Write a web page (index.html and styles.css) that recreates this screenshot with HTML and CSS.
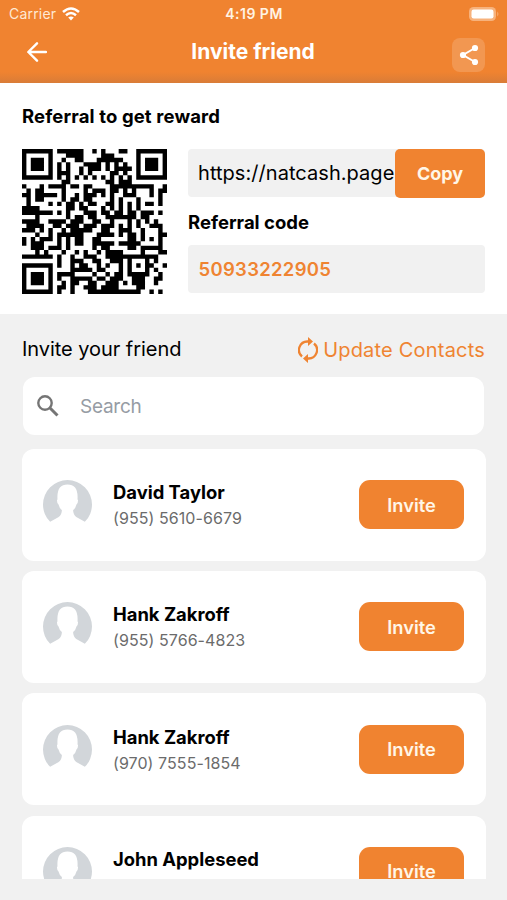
FILE: index.html
```html
<!DOCTYPE html>
<html lang="en">
<head>
    <meta charset="UTF-8">
    <meta name="viewport" content="width=device-width, initial-scale=1.0">
    <title>Invite friend</title>
    <link rel="stylesheet" href="styles.css">
</head>
<body>
    <svg class="sprite">
        <symbol id="avatar" viewBox="0 0 48 48">
            <path fill="#d2d6da" d="M7 41A24 24 0 1 1 41 41L33 36.500Q29.500 34.500 29.500 29.500Q32 27.500 32.800 24Q34.500 22.500 34.300 19.500L33.800 19Q34.800 4.500 24 4.500Q13.200 4.500 14.200 19L13.700 19.500Q13.500 22.500 15.200 24Q16 27.500 18.500 29.500Q18.500 34.500 15 36.500Z"/>
        </symbol>
    </svg>

    <header class="header">
        <div class="status-bar">
            <div class="carrier">
                <span>Carrier</span>
                <svg width="18" height="14" viewBox="0 0 18 14" fill="none" stroke="#fff" stroke-width="2.500">
                    <path d="M1 5Q9-2 17 5M4 8.200Q9 3.900 14 8.200"/>
                    <path d="M9 13.500L6.200 10.600Q9 8.400 11.800 10.600Z" fill="#fff" stroke="none"/>
                </svg>
            </div>
            <span class="time">4:19 PM</span>
            <svg class="battery" width="31" height="14" viewBox="0 0 31 14">
                <rect x="0" y="0" width="27" height="14" rx="4.500" fill="#f7b27c"/>
                <rect x="2.500" y="2.500" width="22" height="9" rx="2.200" fill="#fff"/>
                <path d="M28.300 4.500Q30.500 7 28.300 9.500Z" fill="#f7b27c"/>
            </svg>
        </div>
        <div class="nav">
            <svg class="back" width="20" height="20" viewBox="0 0 20 20" fill="none" stroke="#fff" stroke-width="2.400" stroke-linecap="round" stroke-linejoin="round">
                <path d="M19 10H1.500M10 1.300L1.300 10L10 18.700"/>
            </svg>
            <h1>Invite friend</h1>
            <div class="share">
                <svg width="20" height="22" viewBox="0 0 20 22" fill="#fff">
                    <path d="M16 4L4 11L16 18" fill="none" stroke="#fff" stroke-width="2"/>
                    <circle cx="16" cy="4" r="3.100"/>
                    <circle cx="4" cy="11" r="3.100"/>
                    <circle cx="16" cy="18" r="3.100"/>
                </svg>
            </div>
        </div>
    </header>

    <section class="referral">
        <h2 class="reward-title">Referral to get reward</h2>
        <div class="referral-row">
            <svg class="qr" viewBox="0 0 33 33"><path id="qrPath"/></svg>
            <div class="referral-info">
                <div class="link-box">
                    <span class="link">https://natcash.page</span>
                    <button class="copy-button">Copy</button>
                </div>
                <h2 class="code-title">Referral code</h2>
                <div class="code-box">50933222905</div>
            </div>
        </div>
    </section>

    <section class="contacts">
        <div class="contacts-head">
            <span class="contacts-title">Invite your friend</span>
            <div class="update">
                <svg width="20" height="26" viewBox="0 0 20 26">
                    <path d="M4 19.500A8.500 8.500 0 0 1 10 4.500H11M16 6.500A8.500 8.500 0 0 1 10 21.500H9" fill="none" stroke="#ef8432" stroke-width="2.300"/>
                    <path d="M10 0L15 4.500L10 9ZM10 17L5 21.500L10 26Z" fill="#ef8432"/>
                </svg>
                <span>Update Contacts</span>
            </div>
        </div>
        <div class="search">
            <svg width="22" height="22" viewBox="0 0 22 22" fill="none" stroke="#757575" stroke-width="2.400">
                <circle cx="8" cy="8" r="6.700"/>
                <path d="M13 13L20.500 20.500" stroke-width="3"/>
            </svg>
            <span>Search</span>
        </div>
        <div class="list">
            <div class="card">
                <svg class="avatar"><use href="#avatar"/></svg>
                <div class="person">
                    <div class="name">David Taylor</div>
                    <div class="phone">(955) 5610-6679</div>
                </div>
                <button class="invite-button">Invite</button>
            </div>
            <div class="card">
                <svg class="avatar"><use href="#avatar"/></svg>
                <div class="person">
                    <div class="name">Hank Zakroff</div>
                    <div class="phone">(955) 5766-4823</div>
                </div>
                <button class="invite-button">Invite</button>
            </div>
            <div class="card">
                <svg class="avatar"><use href="#avatar"/></svg>
                <div class="person">
                    <div class="name">Hank Zakroff</div>
                    <div class="phone">(970) 7555-1854</div>
                </div>
                <button class="invite-button">Invite</button>
            </div>
            <div class="card">
                <svg class="avatar"><use href="#avatar"/></svg>
                <div class="person">
                    <div class="name">John Appleseed</div>
                    <div class="phone">&nbsp;</div>
                </div>
                <button class="invite-button">Invite</button>
            </div>
        </div>
    </section>

    <script>
        const qrRows = [
            '#######.######..#.#...##..#######',
            '#.....#...####....###.....#.....#',
            '#.###.#..#..##...######...#.###.#',
            '#.###.#.#.#...####.#.#.#..#.###.#',
            '#.###.#.#.#..#.###.#.####.#.###.#',
            '#.....#.###..#.#....##.#..#.....#',
            '#######.#.#.#.#.#.#.#.#.#.#######',
            '.........##........##.###........',
            '#...#.####.##.##....##########..#',
            '.#.##....#....#.###.##.#.#...#.##',
            '##.#####.#..#.###.#.#..###...#.#.',
            '.#.##....#.##.##....#.#...#....#.',
            '.#....#.#.##.#.##..##.#.#.#.##.#.',
            '####......##.##...#.#.#.#.#......',
            '#######.#.#...###.##.##.##.###.#.',
            '...#......#.##.##..#######.##....',
            '####..####.###..##..#...#.#.#.#..',
            '.####..##.###.###.###.#.#.#..###.',
            '###.#.#..#.#####..##..###..#...#.',
            '...#..#.######...####.#.##.#...##',
            '#.#.###.#.#.##..##......##.#.#.#.',
            '#.###...#.#.##..#####.#####....#.',
            '..###.###.#.....#.##....##.#####.',
            '...#.#...#..#.#..#.####....#...##',
            '#######.#..#..###..############..',
            '........#..###..##..###.#...#.#..',
            '#######.#..#.##..#.#..#.#.#.##..#',
            '#.....#....#####.##...#.#...#.#..',
            '#.###.#.####....#..#.##.#####..#.',
            '#.###.#.#..#####.##.###..###..##.',
            '#.###.#..#.##..##..###.#.###..#..',
            '#.....#.##.#..###.####....##.....',
            '#######.#..#...############..#.#.'
        ];

        let d = '';
        qrRows.forEach((row, y) => {
            for (const run of row.matchAll(/#+/g)) {
                d += `M${run.index} ${y}h${run[0].length}v1h-${run[0].length}z`;
            }
        });
        document.getElementById('qrPath').setAttribute('d', d);
    </script>
</body>
</html>
```
FILE: styles.css
```css
* {
    box-sizing: border-box;
}
body {
    margin: 0;
    height: 900px;
    overflow: hidden;
    background-color: #f1f1f1;
    font-family: Inter, 'Liberation Sans', sans-serif;
    color: #000;
}
h1, h2 {
    margin: 0;
}
button {
    border: none;
    padding: 0;
    font-family: inherit;
    color: #fff6e8;
    background-color: #f08330;
    cursor: pointer;
}
.sprite {
    display: none;
}
.header {
    height: 83px;
    background: linear-gradient(#f08330 72px, #d97c38 83px);
    color: #fff;
}
.status-bar {
    display: grid;
    grid-template-columns: 1fr auto 1fr;
    align-items: center;
    height: 27px;
    padding: 0 7px 0 9px;
    font-size: 14px;
}
.carrier {
    display: flex;
    align-items: center;
    gap: 6px;
    color: #ffe9d3;
    letter-spacing: 0.2px;
}
.time {
    font-weight: 600;
    font-size: 14px;
    letter-spacing: 0.5px;
    margin-right: 1px;
    color: #fff3e4;
}
.battery {
    justify-self: end;
}
.nav {
    display: grid;
    grid-template-columns: 1fr auto 1fr;
    align-items: center;
    height: 50px;
    padding: 0 22px 0 27px;
}
.nav h1 {
    font-size: 21px;
    font-weight: 700;
    line-height: 24px;
    margin-right: 6px;
}
.share {
    justify-self: end;
    display: flex;
    align-items: center;
    justify-content: center;
    width: 33px;
    height: 34px;
    margin-top: 5px;
    border-radius: 8px;
    background-color: rgba(255, 255, 255, 0.16);
}
.referral {
    height: 231px;
    padding: 22px 22px 0;
    background-color: #fff;
}
.referral h2 {
    font-size: 18.500px;
    font-weight: 700;
    line-height: 22px;
}
.referral .reward-title {
    letter-spacing: 0.13px;
}
.referral-row {
    display: flex;
    gap: 21px;
    margin-top: 22px;
}
.qr {
    width: 145px;
    height: 145px;
}
.referral-info {
    flex: 1;
}
.link-box, .code-box {
    display: flex;
    align-items: center;
    height: 48px;
    border-radius: 4px;
    background-color: #f1f1f1;
}
.link {
    flex: 1;
    padding-left: 10px;
    font-size: 20px;
    letter-spacing: 0.05px;
    white-space: nowrap;
}
.copy-button {
    width: 90px;
    height: 49px;
    border-radius: 5px;
    font-size: 18px;
    font-weight: 700;
}
.referral .code-title {
    margin: 14px 0 12px;
}
.code-box {
    padding-left: 10.500px;
    font-size: 18.500px;
    font-weight: 600;
    letter-spacing: 0.3px;
    color: #ef8432;
}
.contacts {
    padding: 20px 22px 0;
}
.contacts-head {
    display: flex;
    justify-content: space-between;
    align-items: center;
    height: 30px;
    font-size: 20px;
}
.contacts-title {
    letter-spacing: -0.05px;
}
.update {
    display: flex;
    align-items: center;
    gap: 5px;
    margin-top: 2px;
    letter-spacing: 0.2px;
    color: #ef8432;
}
.search {
    display: flex;
    align-items: center;
    gap: 21px;
    height: 58px;
    margin: 13px 1px 14px;
    padding-left: 14px;
    border-radius: 12px;
    background-color: #fff;
    font-size: 19px;
    letter-spacing: -0.25px;
    color: #969ca4;
}
.list {
    height: 430px;
    overflow: hidden;
    margin-right: -1px;
}
.card {
    display: flex;
    align-items: center;
    height: 111.500px;
    margin-bottom: 10.700px;
    padding: 0 22px 0 21px;
    border-radius: 12px;
    background-color: #fff;
}
.avatar {
    width: 49px;
    height: 49px;
}
.person {
    flex: 1;
    margin-left: 21px;
    padding-top: 2px;
}
.name {
    font-size: 18.400px;
    font-weight: 700;
    line-height: 25px;
}
.phone {
    font-size: 16px;
    line-height: 26px;
    letter-spacing: 0.07px;
    color: #6b6b6b;
}
.invite-button {
    width: 105px;
    height: 49px;
    border-radius: 11px;
    font-size: 18.300px;
    font-weight: 600;
}
```
